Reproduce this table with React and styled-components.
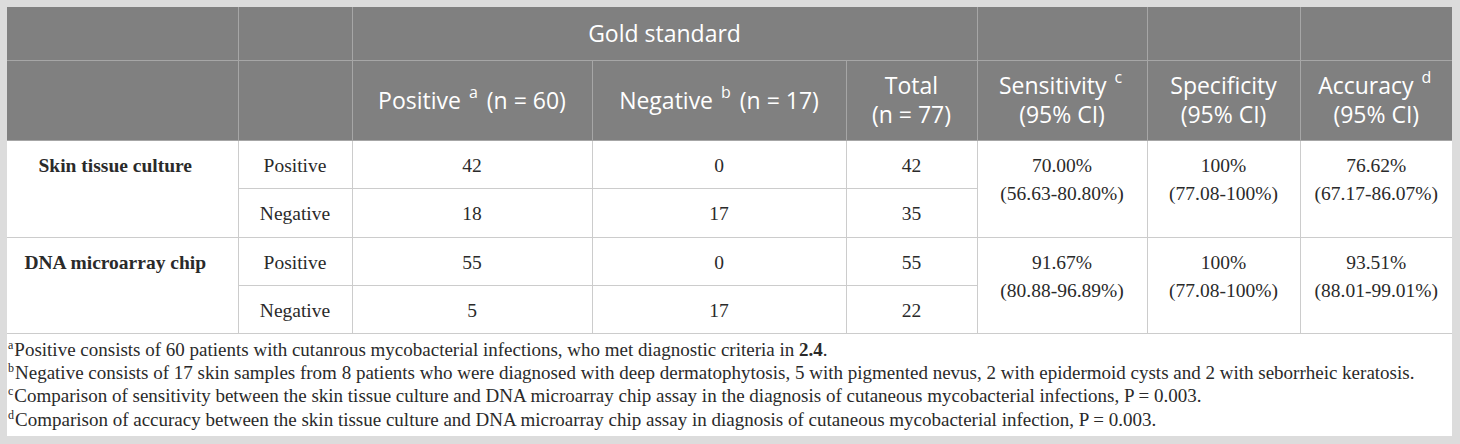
import React from "react";
import styled, { createGlobalStyle } from "styled-components";

const Global = createGlobalStyle`
  html, body { margin: 0; padding: 0; background: #dcdcdc; }
  #root { width: 1460px; height: 444px; }
`;

const Frame = styled.div`
  box-sizing: border-box;
  width: 1460px;
  height: 444px;
  padding: 7px 8px 8px 7px;
  background: #dcdcdc;
`;

const Sheet = styled.div`
  background: #ffffff;
  height: 100%;
  display: flex;
  flex-direction: column;
`;

const Table = styled.table`
  width: 100%;
  table-layout: fixed;
  border-collapse: collapse;
  border-spacing: 0;
`;

const HeadCell = styled.th`
  background: #808080;
  color: #ffffff;
  font-family: "Open Sans", sans-serif;
  font-weight: 400;
  font-size: 23px;
  line-height: 29px;
  text-align: center;
  vertical-align: middle;
  padding: 0 6px;
  border: 1px solid #a6a6a6;
  border-top: none;
  &:first-child { border-left: none; }
  &:last-child { border-right: none; }
`;

const HeadLine = styled.span`
  display: block;
`;

const HeadRow = styled.tr`
  height: ${(p) => p.$h}px;
`;

const Sup = styled.sup`
  font-size: 16px;
  line-height: 0;
  vertical-align: 11px;
  margin: 0 3px 0 2px;
`;

const BodyRow = styled.tr`
  height: ${(p) => p.$h}px;
`;

const Cell = styled.td`
  font-family: "Liberation Serif", "Times New Roman", serif;
  font-size: 19.5px;
  line-height: 28px;
  color: #2a2a2a;
  text-align: center;
  vertical-align: top;
  padding: 11px 4px 0;
  border: 1px solid #cccccc;
  font-weight: ${(p) => (p.$bold ? 700 : 400)};
  padding-right: ${(p) => (p.$bold ? "18px" : "4px")};
  &:first-child { border-left: none; }
  &:last-child { border-right: none; }
`;

const Notes = styled.div`
  padding: 4px 0 0 1px;
  font-family: "Liberation Serif", "Times New Roman", serif;
  font-size: 19px;
  line-height: 23.4px;
  color: #2a2a2a;
`;

const Note = styled.div`
  white-space: nowrap;
`;

const NoteMark = styled.sup`
  font-size: 12px;
  line-height: 0;
  vertical-align: 7px;
  margin-right: 1px;
`;

const colWidths = [231, 114, 240, 254, 131, 170, 153, 152];

const groups = [
  {
    name: "Skin tissue culture",
    rows: [
      ["Positive", "42", "0", "42"],
      ["Negative", "18", "17", "35"],
    ],
    stats: [
      ["70.00%", "(56.63-80.80%)"],
      ["100%", "(77.08-100%)"],
      ["76.62%", "(67.17-86.07%)"],
    ],
    heights: [48, 49],
  },
  {
    name: "DNA microarray chip",
    rows: [
      ["Positive", "55", "0", "55"],
      ["Negative", "5", "17", "22"],
    ],
    stats: [
      ["91.67%", "(80.88-96.89%)"],
      ["100%", "(77.08-100%)"],
      ["93.51%", "(88.01-99.01%)"],
    ],
    heights: [48, 48],
  },
];

const notes = [
  ["a", <>Positive consists of 60 patients with cutanrous mycobacterial infections, who met diagnostic criteria in <b>2.4</b>.</>],
  ["b", "Negative consists of 17 skin samples from 8 patients who were diagnosed with deep dermatophytosis, 5 with pigmented nevus, 2 with epidermoid cysts and 2 with seborrheic keratosis."],
  ["c", "Comparison of sensitivity between the skin tissue culture and DNA microarray chip assay in the diagnosis of cutaneous mycobacterial infections, P = 0.003."],
  ["d", "Comparison of accuracy between the skin tissue culture and DNA microarray chip assay in diagnosis of cutaneous mycobacterial infection, P = 0.003."],
];

export default function App() {
  return (
    <>
      <Global />
      <Frame>
        <Sheet>
          <Table>
            <colgroup>
              {colWidths.map((w, i) => (
                <col key={i} style={{ width: w }} />
              ))}
            </colgroup>
            <thead>
              <HeadRow $h={53}>
                <HeadCell />
                <HeadCell />
                <HeadCell colSpan={3}>Gold standard</HeadCell>
                <HeadCell />
                <HeadCell />
                <HeadCell />
              </HeadRow>
              <HeadRow $h={80}>
                <HeadCell />
                <HeadCell />
                <HeadCell>
                  Positive <Sup>a</Sup> (n = 60)
                </HeadCell>
                <HeadCell>
                  Negative <Sup>b</Sup> (n = 17)
                </HeadCell>
                <HeadCell>
                  <HeadLine>Total</HeadLine>
                  <HeadLine>(n = 77)</HeadLine>
                </HeadCell>
                <HeadCell>
                  <HeadLine>
                    Sensitivity <Sup>c</Sup>
                  </HeadLine>
                  <HeadLine>(95% CI)</HeadLine>
                </HeadCell>
                <HeadCell>
                  <HeadLine>Specificity</HeadLine>
                  <HeadLine>(95% CI)</HeadLine>
                </HeadCell>
                <HeadCell>
                  <HeadLine>
                    Accuracy <Sup>d</Sup>
                  </HeadLine>
                  <HeadLine>(95% CI)</HeadLine>
                </HeadCell>
              </HeadRow>
            </thead>
            <tbody>
              {groups.map((g) =>
                g.rows.map((r, ri) => (
                  <BodyRow key={g.name + ri} $h={g.heights[ri]}>
                    {ri === 0 && (
                      <Cell rowSpan={2} $bold>
                        {g.name}
                      </Cell>
                    )}
                    {r.map((v, ci) => (
                      <Cell key={ci}>{v}</Cell>
                    ))}
                    {ri === 0 &&
                      g.stats.map((s, si) => (
                        <Cell key={"s" + si} rowSpan={2}>
                          {s[0]}
                          <br />
                          {s[1]}
                        </Cell>
                      ))}
                  </BodyRow>
                ))
              )}
            </tbody>
          </Table>
          <Notes>
            {notes.map(([m, t]) => (
              <Note key={m}>
                <NoteMark>{m}</NoteMark>
                {t}
              </Note>
            ))}
          </Notes>
        </Sheet>
      </Frame>
    </>
  );
}
